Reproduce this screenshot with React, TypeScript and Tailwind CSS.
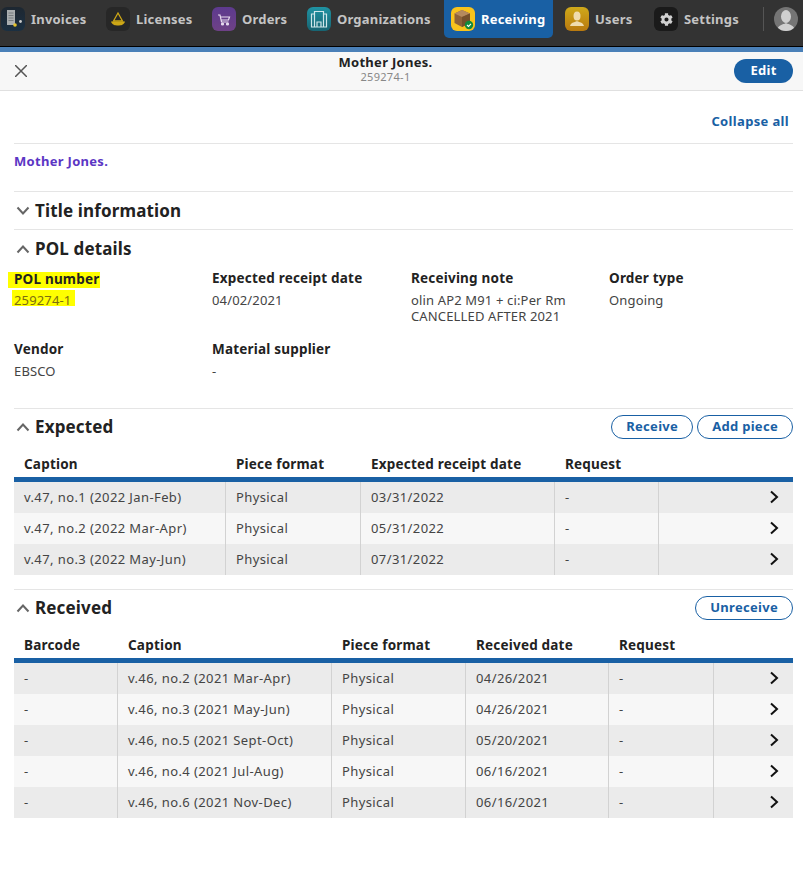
import React from "react";
import { FaCog } from "react-icons/fa";

function AppIcon({ children, className }: { children: React.ReactNode; className: string }) {
  return <span className={"flex h-6 w-6 shrink-0 items-center justify-center rounded-[6px] overflow-hidden " + className}>{children}</span>;
}

function NavItem({ icon, label, active, className }: { icon: React.ReactNode; label: string; active?: boolean; className: string }) {
  return (
    <div className={"flex h-[38px] shrink-0 items-center gap-[6px] rounded-b-[5px] text-[13px] font-bold tracking-[0.2px] " + (active ? "bg-[#1960a4] text-white " : "text-[#c4c4c4] ") + className}>
      {icon}
      <span className="pt-[1px]">{label}</span>
    </div>
  );
}

const Chevron = ({ up }: { up?: boolean }) => (
  <svg width="14" height="14" viewBox="0 0 14 14" fill="none" stroke="#666" strokeWidth="2" className="shrink-0">
    <path d={up ? "M1.5 10.500 L7 4.500 L12.500 10.500" : "M1.500 3.500 L7 9.500 L12.500 3.500"} />
  </svg>
);

const RowArrow = () => (
  <svg width="10" height="14" viewBox="0 0 10 14" fill="none" stroke="#111" strokeWidth="2" className="-mt-[1px]">
    <path d="M2 1.500 L8 7 L2 12.500" />
  </svg>
);

function Pill({ children }: { children: React.ReactNode }) {
  return <span className="flex h-6 items-center rounded-full border border-[#1960a4] px-[14px] text-[13px] font-bold text-[#1960a4] tracking-[0.3px]">{children}</span>;
}

function KV({ k, children, hl }: { k: string; children: React.ReactNode; hl?: boolean }) {
  return (
    <div>
      <div className="h-5 text-[13.5px] font-bold leading-5 text-[#222] tracking-[0.2px]">
        {hl ? <span className="-ml-[6px] mt-[4px] inline-block h-4 bg-[#ffff00] pl-[6px] pr-[1px] align-top leading-[14px]">{k}</span> : k}
      </div>
      <div className="mt-1 h-4 text-[13px] leading-4 text-[#444] tracking-[0.15px]">
        {hl ? <span className="-ml-[2px] -mt-[2px] inline-block h-4 bg-[#ffff00] pl-[2px] pr-[4px] align-top leading-5 text-[#7d6d10]">{children}</span> : children}
      </div>
    </div>
  );
}

function Table({ cols, head, rows }: { cols: string; head: string[]; rows: string[][] }) {
  return (
    <div>
      <div className={"grid h-[32px] items-center pt-[7px] text-[13.5px] font-bold text-[#222] tracking-[0.2px] " + cols}>
        {head.map((h, i) => (
          <div key={i} className={i > 0 ? "pl-[11px]" : "pl-[10px]"}>{h}</div>
        ))}
      </div>
      <div className="h-[5px] bg-[#1960a4]" />
      {rows.map((r, i) => (
        <div key={i} className={"grid h-[31px] items-stretch text-[13px] text-[#444] tracking-[0.4px] " + cols + (i % 2 === 0 ? " bg-[#ebebeb]" : " bg-[#f7f7f7]")}>
          {r.map((c, j) => (
            <div key={j} className={"flex items-center pl-[10px] " + (j > 0 ? "border-l border-[#d2d2d2]" : "")}>{c}</div>
          ))}
          <div className="flex items-center justify-end border-l border-[#d2d2d2] pr-[14px]"><RowArrow /></div>
        </div>
      ))}
    </div>
  );
}

export default function App() {
  return (
    <div className="h-[888px] w-[803px] overflow-hidden bg-white" style={{ fontFamily: "'Noto Sans', sans-serif" }}>
      <div className="flex h-[47px] items-start border-b border-black bg-[#333333]">
        <NavItem className="ml-[1px] w-[105px] gap-[5px]" label="Invoices" icon={
          <AppIcon className="bg-linear-to-b from-[#1d2731] to-[#1b3042]">
            <svg width="24" height="24" viewBox="0 0 24 24"><path d="M6 3h8v15H6z" fill="#a9aeb0" /><path d="M7.500 6h5M7.500 8.500h5M7.500 11h5M7.500 13.500h5" stroke="#777d80" /><circle cx="14" cy="18" r="1.800" fill="#e3c22b" /><circle cx="19.500" cy="14.500" r="1.400" fill="#ccc" /></svg>
          </AppIcon>} />
        <NavItem className="w-[106px] gap-[5px]" label="Licenses" icon={
          <AppIcon className="bg-[#272727]">
            <svg width="24" height="24" viewBox="0 0 24 24"><path d="M12 6 L7.500 14 H16.500 Z" fill="none" stroke="#cda716" strokeWidth="1.300" /><path d="M5 14.500 H19 C18 18 15 18.500 12 18.500 C9 18.500 6 18 5 14.500Z" fill="#cda716" /></svg>
          </AppIcon>} />
        <NavItem className="w-[95px]" label="Orders" icon={
          <AppIcon className="bg-linear-to-b from-[#5d3a8e] to-[#6e4186]">
            <svg width="24" height="24" viewBox="0 0 24 24" fill="none" stroke="#e8dcef" strokeWidth="1.200"><path d="M6 8 H8 L9.500 15 H16.500 M8.500 10 H17.500 L16.500 13 H9" /><circle cx="10.500" cy="17" r="1" fill="#e8dcef" /><circle cx="15.500" cy="17" r="1" fill="#e8dcef" /></svg>
          </AppIcon>} />
        <NavItem className="w-[137px]" label="Organizations" icon={
          <AppIcon className="bg-linear-to-b from-[#1f93a3] to-[#176472]">
            <svg width="24" height="24" viewBox="0 0 24 24" fill="none" stroke="#cfe6ea" strokeWidth="1.200"><path d="M4.500 20V7h3V4.500h9V7h3v13zM7.500 7v13M16.500 7v13M10 20v-5h4v5" /></svg>
          </AppIcon>} />
        <NavItem active className="w-[109px] pl-[7px]" label="Receiving" icon={
          <AppIcon className="relative bg-[#f8c31c]">
            <svg width="24" height="24" viewBox="0 0 24 24"><path d="M11 3 L19 6.500 V16 L11 20 L3.500 16 V6.500 Z" fill="#8d6239" /><path d="M11 10 L19 6.500 L11 3 L3.500 6.500 Z" fill="#b58a5e" /><path d="M11 10 V20 L19 16 V6.500 Z" fill="#74502c" /><circle cx="18" cy="18" r="4.200" fill="#0f8a3c" /><path d="M16 18 l1.500 1.400 l2.500-2.600" stroke="#fff" strokeWidth="1.100" fill="none" /></svg>
          </AppIcon>} />
        <NavItem className="ml-[12px] w-[89px]" label="Users" icon={
          <AppIcon className="bg-linear-to-b from-[#cfa91a] to-[#b8790f]">
            <svg width="24" height="24" viewBox="0 0 24 24"><ellipse cx="12" cy="9" rx="3.500" ry="4.500" fill="#f0dcae" /><path d="M5 19 C6 15 10 15.500 12 14 C14 15.500 18 15 19 19Z" fill="#f0dcae" /></svg>
          </AppIcon>} />
        <NavItem className="w-[109px] gap-[5px]" label="Settings" icon={
          <AppIcon className="bg-[#1a1a1a]"><FaCog size={13} color="#d0d0d0" /></AppIcon>} />
        <div className="mt-[7px] h-6 w-px bg-[#555]" />
        <span className="ml-[10px] mt-[7px] flex h-6 w-6 items-center justify-center overflow-hidden rounded-full bg-[#757575]">
          <svg width="24" height="24" viewBox="0 0 24 24"><ellipse cx="12" cy="9.500" rx="5" ry="6.500" fill="#d0d0d0" /><path d="M3 24 C4 17 9 18 12 16 C15 18 20 17 21 24Z" fill="#d0d0d0" /></svg>
        </span>
      </div>
      <div className="h-[5px] bg-[#4a80b8]" />
      <div className="flex h-[39px] items-center justify-between border-b border-[#e0e0e0] bg-[#f7f7f7] pl-[15px] pr-[10px]">
        <svg width="12" height="12" viewBox="0 0 12 12" stroke="#555" strokeWidth="1.500"><path d="M0 0 L12 12 M12 0 L0 12" /></svg>
        <div className="ml-[10px] pb-[6px] text-center">
          <div className="text-[13px] font-bold leading-4 text-[#222] tracking-[0.3px]">Mother Jones.</div>
          <div className="text-[11px] leading-[13px] text-[#888] tracking-[0.3px]">259274-1</div>
        </div>
        <span className="flex h-6 w-[59px] items-center justify-center rounded-full bg-[#1960a4] text-[13px] font-bold text-white tracking-[0.3px]">Edit</span>
      </div>
      <div className="px-[14px] pr-[10px]">
        <div className="flex h-[53px] items-end justify-end border-b border-[#e5e5e5] pb-[12px] pr-[4px] text-[13px] font-bold text-[#1960a4] tracking-[0.35px]">Collapse all</div>
        <div className="flex h-[48px] items-start border-b border-[#e5e5e5] pt-[8px] text-[13px] font-bold text-[#5b36c4] tracking-[0.3px]">Mother Jones.</div>
        <div className="flex h-[38px] items-center gap-[5px] border-b border-[#e5e5e5] pl-[2px] text-[17px] font-bold text-[#222] tracking-[0.15px]"><Chevron />Title information</div>
        <div className="flex h-[37px] items-center gap-[5px] pl-[2px] text-[17px] font-bold text-[#222] tracking-[0.15px]"><Chevron up />POL details</div>
        <div className="grid h-[142px] grid-cols-[198px_199px_198px_184px] content-start gap-y-[15px] border-b border-[#e5e5e5] pt-[1px]">
          <KV k="POL number" hl>259274-1</KV>
          <KV k="Expected receipt date">04/02/2021</KV>
          <div>
            <div className="h-5 text-[13.5px] font-bold leading-5 text-[#222] tracking-[0.2px]">Receiving note</div>
            <div className="mt-1 text-[13px] leading-4 text-[#444] tracking-[0.15px]">olin AP2 M91 + ci:Per Rm<br />CANCELLED AFTER 2021</div>
          </div>
          <KV k="Order type">Ongoing</KV>
          <KV k="Vendor">EBSCO</KV>
          <KV k="Material supplier">-</KV>
        </div>
        <div className="flex h-[36px] items-center justify-between pl-[2px]">
          <div className="flex items-center gap-[5px] text-[17px] font-bold text-[#222] tracking-[0.15px]"><Chevron up />Expected</div>
          <div className="flex gap-[4px]"><Pill>Receive</Pill><Pill>Add piece</Pill></div>
        </div>
        <Table cols="grid-cols-[211px_135px_194px_104px_135px]" head={["Caption", "Piece format", "Expected receipt date", "Request", ""]}
          rows={[
            ["v.47, no.1 (2022 Jan-Feb)", "Physical", "03/31/2022", "-"],
            ["v.47, no.2 (2022 Mar-Apr)", "Physical", "05/31/2022", "-"],
            ["v.47, no.3 (2022 May-Jun)", "Physical", "07/31/2022", "-"],
          ]} />
        <div className="mt-[14px] flex h-[37px] items-center justify-between border-t border-[#e5e5e5] pl-[2px]">
          <div className="flex items-center gap-[5px] text-[17px] font-bold text-[#222] tracking-[0.15px]"><Chevron up />Received</div>
          <Pill>Unreceive</Pill>
        </div>
        <Table cols="grid-cols-[103px_214px_134px_143px_105px_80px]" head={["Barcode", "Caption", "Piece format", "Received date", "Request", ""]}
          rows={[
            ["-", "v.46, no.2 (2021 Mar-Apr)", "Physical", "04/26/2021", "-"],
            ["-", "v.46, no.3 (2021 May-Jun)", "Physical", "04/26/2021", "-"],
            ["-", "v.46, no.5 (2021 Sept-Oct)", "Physical", "05/20/2021", "-"],
            ["-", "v.46, no.4 (2021 Jul-Aug)", "Physical", "06/16/2021", "-"],
            ["-", "v.46, no.6 (2021 Nov-Dec)", "Physical", "06/16/2021", "-"],
          ]} />
      </div>
    </div>
  );
}
